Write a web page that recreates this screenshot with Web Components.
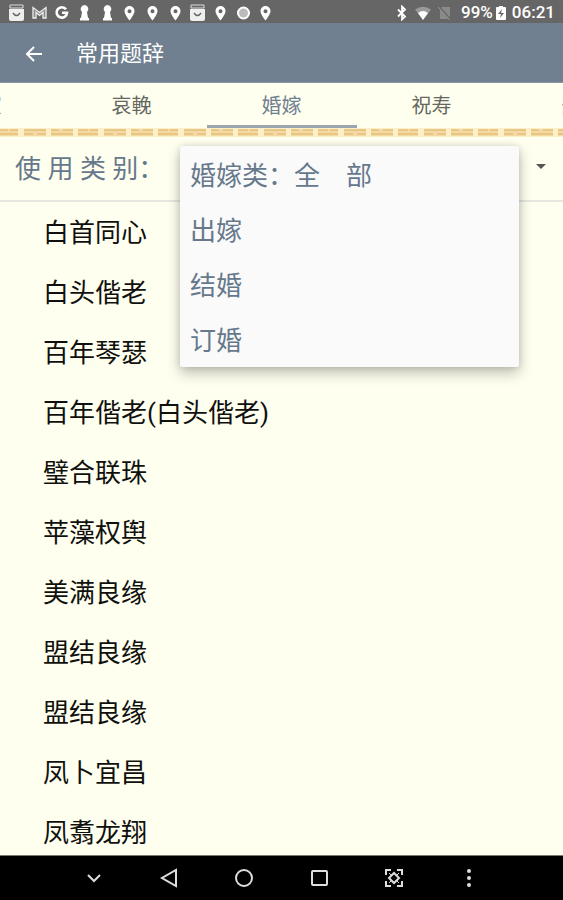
<!DOCTYPE html>
<html lang="zh-CN">
<head>
<meta charset="utf-8">
<meta name="viewport" content="width=device-width, initial-scale=1">
<title>常用题辞</title>
<style>
  :root {
    --bar: #708090;
    --paper: #fffff0;
    --accent: #66788c;
    --ink: #10100e;
  }
  html, body { height: 100%; }
  body {
    margin: 0;
    background: var(--paper);
    color: var(--ink);
    font-family: Roboto, "Noto Sans CJK SC", sans-serif;
  }
</style>
</head>
<body>
<phrase-app>
  <status-bar slot="top" battery="99%" time="06:21"></status-bar>
  <app-bar slot="top">常用题辞</app-bar>
  <tab-strip slot="top" selected="婚嫁" tabs="居室,哀輓,婚嫁,祝寿,开业"></tab-strip>
  <category-filter slot="top" options="婚嫁类：全　部,出嫁,结婚,订婚">使 用 类 别：</category-filter>
  <phrase-list>
    <phrase-item>白首同心</phrase-item>
    <phrase-item>白头偕老</phrase-item>
    <phrase-item>百年琴瑟</phrase-item>
    <phrase-item>百年偕老(白头偕老)</phrase-item>
    <phrase-item>璧合联珠</phrase-item>
    <phrase-item>苹藻权舆</phrase-item>
    <phrase-item>美满良缘</phrase-item>
    <phrase-item>盟结良缘</phrase-item>
    <phrase-item>盟结良缘</phrase-item>
    <phrase-item>凤卜宜昌</phrase-item>
    <phrase-item>凤翥龙翔</phrase-item>
  </phrase-list>
  <nav-bar slot="bottom"></nav-bar>
</phrase-app>

<script>
(() => {
    class BaseElement extends HTMLElement {
        connectedCallback() {
            if (this.shadowRoot) return;
            this.attachShadow({ mode: 'open' });
            this.shadowRoot.appendChild(document.createRange().createContextualFragment(
                `<style>:host, * { box-sizing: border-box; }</style>${this.render()}`));
            this.instrument(this.shadowRoot);
        }

        instrument() {}
    }

    customElements.define('phrase-app', class extends BaseElement {
        render() {
            return `
                <style>
                :host {
                    display: flex;
                    flex-direction: column;
                    height: 100vh;
                    overflow: hidden;
                }
                main {
                    flex: 1;
                    min-height: 0;
                    overflow: hidden;
                }
                </style>
                <slot name="top"></slot>
                <main><slot></slot></main>
                <slot name="bottom"></slot>
            `;
        }
    });

    const STATUS_ICONS = {
        mail: `<path d="M2 2h13v3H2z" fill="none" stroke="#ddd" stroke-width="1"/><path d="M1 6h15v10q0 2-2 2H3q-2 0-2-2z" fill="#eee"/><path d="M5 10q3.500 5 7 0" fill="none" stroke="#666" stroke-width="1.500"/>`,
        gmail: `<path d="M2 15V4.500l6.500 5L15 4.500V15h-3V9.500L8.500 12.500 5 9.500V15z" fill="#888" stroke="#eee" stroke-width="1.300"/>`,
        google: `<path d="M13 6.300A5.200 5.200 0 1 0 14 9.800H9" fill="none" stroke="#fff" stroke-width="2.600"/>`,
        keyhole: `<path d="M8.500 2a4 4 0 0 1 2.500 7l1 6h1v2.500H4V15h1l1-6A4 4 0 0 1 8.500 2z" fill="#fff"/>`,
        pin: `<path fill-rule="evenodd" d="M8.500 3a5 5 0 0 1 5 5c0 3.500-5 9.500-5 9.500S3.500 11.500 3.500 8a5 5 0 0 1 5-5zm0 3.200a2 2 0 1 0 0 4 2 2 0 0 0 0-4z" fill="#fff"/>`,
        disc: `<circle cx="8.500" cy="10" r="5.500" fill="#bbb" stroke="#fff" stroke-width="2"/>`
    };
    const NOTICES = ['mail', 'gmail', 'google', 'keyhole', 'keyhole', 'pin', 'pin', 'pin', 'mail', 'pin', 'disc', 'pin'];

    customElements.define('status-bar', class extends BaseElement {
        render() {
            const icons = NOTICES.map(n => `<svg width="17" height="20" viewBox="0 0 17 20">${STATUS_ICONS[n]}</svg>`).join('');
            return `
                <style>
                :host {
                    display: flex;
                    flex: none;
                    align-items: center;
                    justify-content: space-between;
                    height: 23px;
                    padding: 2px 8px 0;
                    background: #666;
                    color: #fff;
                    font-size: 17px;
                    font-weight: 500;
                    line-height: 21px;
                }
                svg { display: block; flex: none; }
                .notices {
                    display: grid;
                    grid-auto-flow: column;
                    grid-template-columns: repeat(4, 23px 22px 23px);
                }
                .system { display: flex; align-items: center; gap: 6px; }
                .signal { margin-right: 3px; }
                .level { display: flex; align-items: center; gap: 3px; }
                </style>
                <div class="notices">${icons}</div>
                <div class="system">
                    <svg width="12" height="16" viewBox="0 0 12 16" fill="none" stroke="#fff" stroke-width="1.800"><path d="M2 4.500l7 7L6 14.500v-13l3 3-7 7"/></svg>
                    <svg width="18" height="16" viewBox="0 0 18 16"><path d="M1 4.500Q9-1 17 4.500L9 15z" fill="#999"/><path d="M4 8q5-4 10 0l-5 7z" fill="#fff"/></svg>
                    <svg class="signal" width="14" height="16" viewBox="0 0 14 16"><path d="M4 2h8v12H2V4z" fill="#8a8a8a"/><path d="M1 2l12 13" stroke="#666" stroke-width="2"/><path d="M0 2l12 13" stroke="#999"/></svg>
                    <span class="level">${this.getAttribute('battery')}
                        <svg width="10" height="16" viewBox="0 0 10 16"><path d="M3 1h4v1h2q1 0 1 1v11q0 1-1 1H1q-1 0-1-1V3q0-1 1-1h2z" fill="#fff"/><path d="M6 4L2 9h3l-1 4 4-5H5z" fill="#666"/></svg>
                    </span>
                    <time>${this.getAttribute('time')}</time>
                </div>
            `;
        }
    });

    customElements.define('app-bar', class extends BaseElement {
        render() {
            return `
                <style>
                :host {
                    display: flex;
                    flex: none;
                    align-items: center;
                    gap: 28px;
                    height: 60px;
                    padding: 2px 20px 0;
                    border-bottom: 1px solid #8a96a0;
                    background: var(--bar);
                    color: #fff;
                }
                button {
                    display: grid;
                    place-items: center;
                    width: 28px;
                    height: 40px;
                    padding: 0;
                    border: 0;
                    background: none;
                    color: inherit;
                }
                h1 {
                    margin: 0;
                    font-size: 22px;
                    font-weight: 400;
                    line-height: 32px;
                }
                </style>
                <button type="button" aria-label="返回">
                    <svg width="18" height="18" viewBox="0 0 18 18" fill="none" stroke="currentColor" stroke-width="2"><path d="M17 9H3M9 2L2 9l7 7"/></svg>
                </button>
                <h1><slot></slot></h1>
            `;
        }
    });

    customElements.define('tab-strip', class extends BaseElement {
        render() {
            const selected = this.getAttribute('selected');
            const tabs = this.getAttribute('tabs').split(',')
                .map(t => `<button type="button" role="tab" aria-selected="${t === selected}">${t}</button>`)
                .join('');
            return `
                <style>
                :host { display: block; flex: none; overflow: hidden; }
                [role="tablist"] {
                    display: flex;
                    justify-content: center;
                    height: 45px;
                }
                button {
                    flex: 0 0 150px;
                    padding: 4px 0 0;
                    border: 0;
                    border-bottom: 3px solid transparent;
                    background: none;
                    color: #66675f;
                    font: inherit;
                    font-size: 20px;
                    line-height: 30px;
                }
                button[aria-selected="true"] {
                    border-color: #9ba6ae;
                    color: var(--bar);
                }
                .band { display: block; width: 100%; height: 9px; }
                </style>
                <div role="tablist">${tabs}</div>
                <svg class="band" aria-hidden="true">
                    <defs>
                        <pattern id="bricks" width="80" height="9" patternUnits="userSpaceOnUse">
                            <path fill="#fdf0c8" d="M0 0h80v9H0z"/>
                            <path fill="#f3d9a2" d="M0 1h18v7H0zM24 1h22v7H24zM51 1h22v7H51zM78 1h2v7h-2z"/>
                            <path fill="#e9c586" d="M0 1h8v2H0zM10 1h8v2h-8zM0 5h18v2H0zM24 1h22v2H24zM24 5h9v2h-9zM37 5h9v2h-9zM51 1h8v2h-8zM63 1h10v2H63zM51 5h22v2H51zM78 1h2v2h-2zM78 5h2v2h-2z"/>
                        </pattern>
                    </defs>
                    <rect width="100%" height="9" fill="url(#bricks)"/>
                </svg>
            `;
        }

        instrument(root) {
            const tabs = [...root.querySelectorAll('[role="tab"]')];
            tabs.forEach(tab => tab.addEventListener('click', () => {
                tabs.forEach(t => t.setAttribute('aria-selected', t === tab));
            }));
        }
    });

    customElements.define('category-filter', class extends BaseElement {
        render() {
            const options = this.getAttribute('options').split(',').map(o => `<option>${o}</option>`).join('');
            return `
                <style>
                :host {
                    position: relative;
                    z-index: 1;
                    display: flex;
                    flex: none;
                    align-items: center;
                    justify-content: space-between;
                    height: 65px;
                    padding: 0 8px 4px 15px;
                    border-bottom: 2px solid #e6e8e0;
                    color: var(--accent);
                    font-size: 26px;
                }
                button {
                    display: grid;
                    place-items: center;
                    width: 28px;
                    height: 40px;
                    padding: 0;
                    border: 0;
                    background: none;
                    color: #555;
                }
                /* open list, drawn over the row and the phrases below it */
                select {
                    position: absolute;
                    top: 9px;
                    left: 180px;
                    right: 44px;
                    padding: 1px 0 0;
                    border: 0;
                    border-radius: 2px;
                    outline: 0;
                    overflow: hidden;
                    background: #fafafa;
                    box-shadow: 0 6px 14px rgba(0, 0, 0, .26), 0 0 6px rgba(0, 0, 0, .12);
                    color: inherit;
                    font: inherit;
                }
                select[hidden] { display: none; }
                option {
                    height: 55px;
                    min-height: 55px;
                    padding: 8px 10px 0;
                }
                </style>
                <label for="category"><slot></slot></label>
                <button type="button" aria-label="展开" aria-controls="category" aria-expanded="true">
                    <svg width="10" height="6" viewBox="0 0 10 6" fill="currentColor"><path d="M0 0h10L5 5z"/></svg>
                </button>
                <select id="category" size="4">${options}</select>
            `;
        }

        instrument(root) {
            const button = root.querySelector('button');
            const select = root.querySelector('select');
            const expand = flag => {
                select.hidden = !flag;
                button.setAttribute('aria-expanded', flag);
            };
            button.addEventListener('click', () => expand(select.hidden));
            select.addEventListener('change', () => expand(false));
        }
    });

    customElements.define('phrase-list', class extends BaseElement {
        render() {
            return `
                <style>
                :host { display: block; padding-top: 1px; }
                </style>
                <div role="list"><slot></slot></div>
            `;
        }
    });

    customElements.define('phrase-item', class extends BaseElement {
        render() {
            return `
                <style>
                :host {
                    display: block;
                    padding: 0 43px;
                    font-size: 26px;
                    line-height: 60px;
                }
                </style>
                <div role="listitem"><slot></slot></div>
            `;
        }
    });

    const NAV_ICONS = [
        ['收起', '<path d="M6 9l6 6 6-6"/>'],
        ['后退', '<path d="M19 4v16L5 12z"/>'],
        ['主页', '<circle cx="12" cy="12" r="8"/>'],
        ['最近', '<rect x="5" y="5" width="15" height="14" rx="1"/>'],
        ['截屏', '<path d="M4 9V4h5M15 4h5v5M20 15v5h-5M9 20H4v-5"/><path d="M12 7l5 5-5 5-5-5z"/><path d="M7 7l3 3M17 7l-3 3M7 17l3-3M17 17l-3-3" stroke-width="1"/>'],
        ['更多', '<g fill="currentColor" stroke="none"><circle cx="12" cy="5" r="2"/><circle cx="12" cy="12" r="2"/><circle cx="12" cy="19" r="2"/></g>']
    ];

    customElements.define('nav-bar', class extends BaseElement {
        render() {
            return `
                <style>
                :host {
                    display: block;
                    flex: none;
                    border-top: 1px solid #777a70;
                    background: #000;
                    color: #ddd;
                }
                nav {
                    display: grid;
                    grid-template-columns: repeat(6, 75px);
                    justify-content: center;
                }
                button {
                    display: grid;
                    place-items: center;
                    height: 44px;
                    padding: 0;
                    border: 0;
                    background: none;
                    color: inherit;
                }
                svg {
                    fill: none;
                    stroke: currentColor;
                    stroke-width: 2;
                }
                </style>
                <nav>${NAV_ICONS.map(([label, icon]) => `
                    <button type="button" aria-label="${label}"><svg width="24" height="24" viewBox="0 0 24 24">${icon}</svg></button>`).join('')}
                </nav>
            `;
        }
    });
})();
</script>
</body>
</html>
